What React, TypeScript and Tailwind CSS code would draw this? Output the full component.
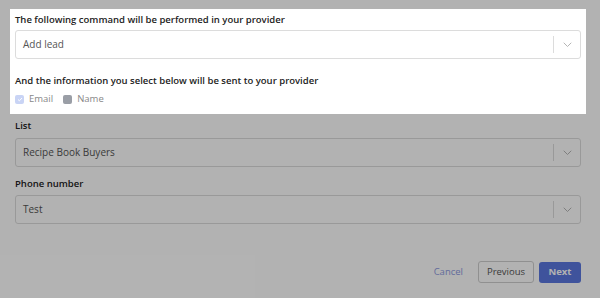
import React from "react";

function Chevron() {
  return (
    <svg width="9" height="6" viewBox="0 0 9 6" fill="none" className="block">
      <path d="M1 1l3.5 3.5L8 1" stroke="#b5b5b5" strokeWidth="1" strokeLinecap="round" strokeLinejoin="round" />
    </svg>
  );
}

function Select({ value }: { value: string }) {
  return (
    <div className="flex h-[29px] items-center rounded-[3px] border border-[#dcdcdc] bg-white">
      <div className="flex-1 pl-[7px] text-[10px] text-[#555]">{value}</div>
      <div className="h-[17px] w-px bg-[#dcdcdc]" />
      <div className="flex w-[26px] items-center justify-center">
        <Chevron />
      </div>
    </div>
  );
}

export default function App() {
  return (
    <div
      className="relative h-[298px] w-[600px] overflow-hidden bg-white pl-[10px] pr-[14px]"
      style={{ fontFamily: '"Open Sans", sans-serif' }}
    >
      <div className="absolute inset-0 z-10 bg-black/30" />
      <div className="relative z-20 mt-[9px] bg-white px-[5px] pt-[4px] pb-[8px]">
        <div className="text-[9.5px] font-semibold leading-[14px] text-[#222]">
          The following command will be performed in your provider
        </div>
        <div className="mt-[3px]">
          <Select value="Add lead" />
        </div>
        <div className="mt-[15px] text-[9.5px] font-semibold leading-[14px] text-[#222]">
          And the information you select below will be sent to your provider
        </div>
        <div className="mt-[4px] flex items-center gap-[5px] text-[9.5px] text-[#888]">
          <span className="flex h-[9px] w-[9px] items-center justify-center rounded-[2px] bg-[#c9d4f5]">
            <svg width="6" height="5" viewBox="0 0 6 5" fill="none">
              <path d="M1 2.5l1.4 1.3L5 1" stroke="#fff" strokeWidth="1" />
            </svg>
          </span>
          <span>Email</span>
          <span className="ml-[5px] h-[9px] w-[9px] rounded-[2px] bg-[#9a9ea6]" />
          <span>Name</span>
        </div>
      </div>
      <div className="px-[5px] pt-[5px]">
        <div className="text-[9.5px] font-semibold leading-[14px] text-[#222]">List</div>
        <div className="mt-[5px]">
          <Select value="Recipe Book Buyers" />
        </div>
        <div className="mt-[10px] text-[9.5px] font-semibold leading-[14px] text-[#222]">Phone number</div>
        <div className="mt-[4px]">
          <Select value="Test" />
        </div>
        <div className="mt-[37px] flex items-center justify-end">
          <span className="mr-[15px] text-[9.5px] text-[#8e9ae0]">Cancel</span>
          <button className="h-[22px] w-[56px] rounded-[3px] border border-[#cfcfcf] bg-white text-[9.5px] text-[#555]">
            Previous
          </button>
          <button className="ml-[5px] h-[21px] w-[42px] rounded-[3px] bg-[#5b78e0] text-[9.5px] font-bold text-white">
            Next
          </button>
        </div>
      </div>
    </div>
  );
}
